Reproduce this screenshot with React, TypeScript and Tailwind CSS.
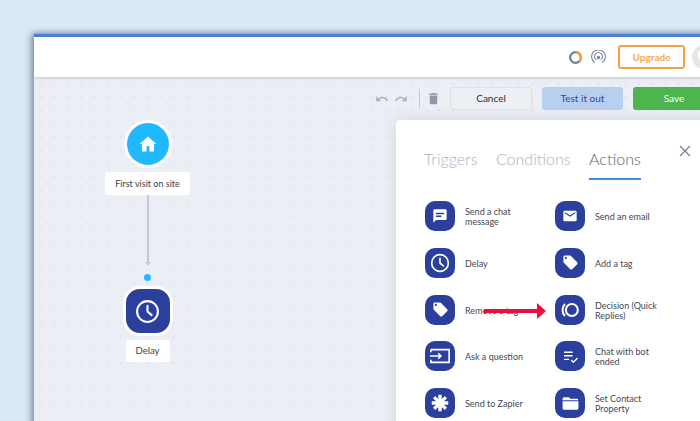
const TAG = "M21.41 11.58l-9-9C12.05 2.22 11.55 2 11 2H4c-1.1 0-2 .9-2 2v7c0 .55.22 1.05.59 1.42l9 9c.36.36.86.58 1.41.58s1.05-.22 1.41-.59l7-7c.37-.36.59-.86.59-1.41s-.23-1.06-.59-1.42zM5.5 7C4.67 7 4 6.33 4 5.5S4.67 4 5.5 4 7 4.67 7 5.5 6.33 7 5.5 7z"

const Clock = ({ className }: { className: string }) => (
  <svg viewBox="0 0 24 24" fill="none" stroke="white" strokeWidth="2" strokeLinecap="round" className={className}>
    <circle cx="12" cy="12" r="10" />
    <path d="M12 6.5V12l4 3.5" />
  </svg>
)

const Tag = () => (
  <svg viewBox="0 0 24 24" fill="white" className="w-[17px] h-[17px]">
    <path d={TAG} />
  </svg>
)

const actions = [
  {
    label: "Send a chat message",
    width: "w-[50px]",
    icon: (
      <svg viewBox="0 0 24 24" fill="white" className="w-[16px] h-[16px]">
        <path d="M20 2H4c-1.1 0-2 .9-2 2v18l4-4h14c1.1 0 2-.9 2-2V4c0-1.1-.9-2-2-2zM6 7h12v2.2H6V7zm8 6.5H6v-2.2h8v2.2z" fillRule="evenodd" />
      </svg>
    ),
  },
  {
    label: "Send an email",
    width: "w-[70px]",
    icon: (
      <svg viewBox="0 0 24 24" fill="white" className="w-[16px] h-[16px]">
        <path d="M20 4H4c-1.1 0-2 .9-2 2v12c0 1.1.9 2 2 2h16c1.1 0 2-.9 2-2V6c0-1.1-.9-2-2-2zm0 4l-8 5-8-5V6l8 5 8-5v2z" />
      </svg>
    ),
  },
  { label: "Delay", width: "w-[50px]", icon: <Clock className="w-[20px] h-[20px]" /> },
  { label: "Add a tag", width: "w-[70px]", icon: <Tag /> },
  { label: "Remove a tag", width: "w-[70px]", icon: <Tag /> },
  {
    label: "Decision (Quick Replies)",
    width: "w-[66px]",
    icon: (
      <svg viewBox="0 0 24 24" fill="none" stroke="white" strokeWidth="2.2" className="w-[22px] h-[22px]">
        <circle cx="14" cy="12" r="6.5" />
        <path d="M6.5 5.5C3 9 3 15 6.5 18.5" />
      </svg>
    ),
  },
  {
    label: "Ask a question",
    width: "w-[70px]",
    icon: (
      <svg viewBox="0 0 24 24" fill="none" stroke="white" strokeWidth="1.8" className="w-[22px] h-[22px]">
        <path d="M2 5h20v14H2v-3M2 8V5" />
        <path d="M1 12h12M10 9l3 3-3 3" />
      </svg>
    ),
  },
  {
    label: "Chat with bot ended",
    width: "w-[56px]",
    icon: (
      <svg viewBox="0 0 24 24" fill="none" stroke="white" strokeWidth="2" className="w-[17px] h-[17px]">
        <path d="M3 6h12M3 11h12M3 16h7M13 17l3 3 6-6" />
      </svg>
    ),
  },
  {
    label: "Send to Zapier",
    width: "w-[70px]",
    icon: (
      <svg viewBox="0 0 24 24" fill="none" stroke="white" strokeWidth="4.5" className="w-[18px] h-[18px]">
        <path d="M12 1v22M1 12h22M4.2 4.2l15.6 15.6M19.8 4.2L4.2 19.8" />
      </svg>
    ),
  },
  {
    label: "Set Contact Property",
    width: "w-[50px]",
    icon: (
      <svg viewBox="0 0 24 24" fill="white" className="w-[19px] h-[19px]">
        <path d="M10 4H4c-1.1 0-1.99.9-1.99 2L2 18c0 1.1.9 2 2 2h16c1.1 0 2-.9 2-2V9H2V8h20c0-1.1-.9-2-2-2h-8l-2-2z" />
      </svg>
    ),
  },
]

export default function App() {
  return (
    <div className="relative w-[700px] h-[421px] overflow-hidden bg-[#dce9f7] pt-[34px] pl-[34px] font-['Lato',sans-serif]">
      <div className="w-[720px] h-[400px] border-t-[3px] border-[#4a80d8] shadow-[-3px_0_7px_rgba(70,95,130,0.55),0_-2px_5px_rgba(70,95,130,0.3)]">
        <header className="relative z-10 flex items-center h-[40px] pl-[535px] bg-white shadow-[0_1px_3px_rgba(120,130,150,0.35)]">
          <svg viewBox="0 0 24 24" fill="none" strokeWidth="4" className="w-[13px] h-[13px]">
            <circle cx="12" cy="12" r="10" stroke="#6d7c9c" />
            <path d="M12 2a10 10 0 0 1 7 17" stroke="#ee9c3f" />
          </svg>
          <svg viewBox="0 0 24 24" fill="none" stroke="#7d89a6" strokeWidth="1.8" className="w-[15px] h-[15px] ml-[9px]">
            <path d="M6 20a11 11 0 1 1 12 0" />
            <path d="M8.5 16a6.5 6.5 0 1 1 7 0" />
            <circle cx="12" cy="12" r="2" fill="#7d89a6" />
          </svg>
          <button className="w-[67px] h-[24px] ml-[12px] border-2 border-[#f0a445] rounded-[3px] text-[10px] font-bold text-[#f0a94f]">
            Upgrade
          </button>
          <div className="relative w-[24px] h-[24px] ml-[7px] rounded-full bg-[#e6e6e6] overflow-hidden">
            <div className="absolute left-[6px] top-[4px] w-[10px] h-[12px] rounded-full bg-white" />
          </div>
        </header>

        <main className="relative h-[357px] overflow-hidden bg-[#ebeef4] bg-[radial-gradient(#dfe2e9_1px,transparent_1.2px)] bg-[size:13.3px_13.3px]">
          <div className="flex items-center h-[23px] mt-[10px] ml-[341px]">
            <svg viewBox="0 0 24 24" fill="#a9b0bf" className="w-[14px] h-[14px]">
              <path d="M12.5 8c-2.65 0-5.05.99-6.9 2.6L2 7v9h9l-3.62-3.62c1.39-1.16 3.16-1.88 5.12-1.88 3.54 0 6.55 2.31 7.6 5.5l2.37-.78C21.08 11.03 17.15 8 12.5 8z" />
            </svg>
            <svg viewBox="0 0 24 24" fill="#a9b0bf" className="w-[14px] h-[14px] ml-[5px]">
              <path d="M18.4 10.6C16.55 8.99 14.15 8 11.5 8c-4.65 0-8.58 3.03-9.96 7.22L3.9 16c1.05-3.19 4.05-5.5 7.6-5.5 1.95 0 3.73.72 5.12 1.88L13 16h9V7l-3.6 3.6z" />
            </svg>
            <div className="w-px h-[19px] bg-[#c3c8d3] ml-[11px]" />
            <svg viewBox="0 0 24 24" fill="#8f98ab" className="w-[15px] h-[15px] ml-[6px]">
              <path d="M6 19c0 1.1.9 2 2 2h8c1.1 0 2-.9 2-2V7H6v12zM19 4h-3.5l-1-1h-5l-1 1H5v2h14V4z" />
            </svg>
            <button className="w-[82px] h-[23px] ml-[9px] bg-[#eceff4] border border-[#dcdfe6] rounded-[3px] text-[10px] text-[#2a2e3a]">
              Cancel
            </button>
            <button className="w-[81px] h-[23px] ml-[10px] bg-[#b9cff0] rounded-[3px] text-[10px] text-[#2d479c]">
              Test it out
            </button>
            <button className="w-[82px] h-[23px] ml-[10px] bg-[#4db44e] rounded-[3px] text-[10px] text-white">
              Save
            </button>
          </div>

          <section className="w-[340px] h-[320px] mt-[10px] ml-[362px] pt-[28px] pl-[28px] bg-white rounded-tl-[4px] shadow-[0_0_14px_rgba(130,145,175,0.25)]">
            <div className="relative flex items-start gap-[18.5px] text-[16px] font-light leading-[22px] text-[#a9afc2]">
              <span>Triggers</span>
              <span>Conditions</span>
              <span className="h-[32px] border-b-2 border-[#3a8ee0] text-[#5d6273]">Actions</span>
              <svg viewBox="0 0 12 12" fill="none" stroke="#6f7a90" strokeWidth="1.1" className="absolute left-[255px] top-[-3px] w-[12px] h-[12px]">
                <path d="M1 1l10 10M11 1L1 11" />
              </svg>
            </div>
            <div className="grid grid-cols-[130px_130px] auto-rows-[46.8px] mt-[21px] ml-px">
              {actions.map((action) => (
                <div key={action.label} className="flex items-center h-[30px] gap-[10px]">
                  <div className="flex shrink-0 items-center justify-center w-[30px] h-[30px] rounded-[10px] bg-[#2a409c]">
                    {action.icon}
                  </div>
                  <span className={`${action.width} pt-[2px] text-[9px] leading-[10px] text-[#44474f]`}>{action.label}</span>
                </div>
              ))}
            </div>
          </section>

          <div className="absolute left-[71px] top-[43px] flex flex-col items-center w-[85px]">
            <div className="flex items-center justify-center w-[48px] h-[48px] rounded-full bg-[#20b9fd] border-[3px] border-white">
              <svg viewBox="0 0 24 24" fill="white" className="w-[18px] h-[18px]">
                <path d="M12 2L1 12h3v10h6v-7h4v7h6V12h3z" />
              </svg>
            </div>
            <div className="flex items-center justify-center w-[85px] h-[23px] mt-[4px] rounded-[2px] bg-white text-[9px] text-[#3a3d4a]">
              First visit on site
            </div>
            <div className="w-[2px] h-[67px] bg-[#c3c8d6]" />
            <div className="w-0 h-0 border-x-[3px] border-x-transparent border-t-[4px] border-t-[#c3c8d6]" />
            <div className="w-[7px] h-[7px] mt-[8px] rounded-full bg-[#20b9fd]" />
            <div className="flex items-center justify-center w-[50px] h-[50px] mt-[5px] rounded-[17px] bg-[#2a409c] border-[3px] border-white">
              <Clock className="w-[25px] h-[25px]" />
            </div>
            <div className="flex items-center justify-center w-[44px] h-[22px] mt-[4px] rounded-[2px] bg-white text-[9.5px] text-[#3a3d4a]">
              Delay
            </div>
          </div>
        </main>
      </div>

      <svg viewBox="0 0 62 16" fill="#e8103f" className="absolute left-[484px] top-[303px] w-[62px] h-[16px]">
        <path d="M0 6h53V0l9 8-9 8v-6H0z" />
      </svg>
    </div>
  )
}
